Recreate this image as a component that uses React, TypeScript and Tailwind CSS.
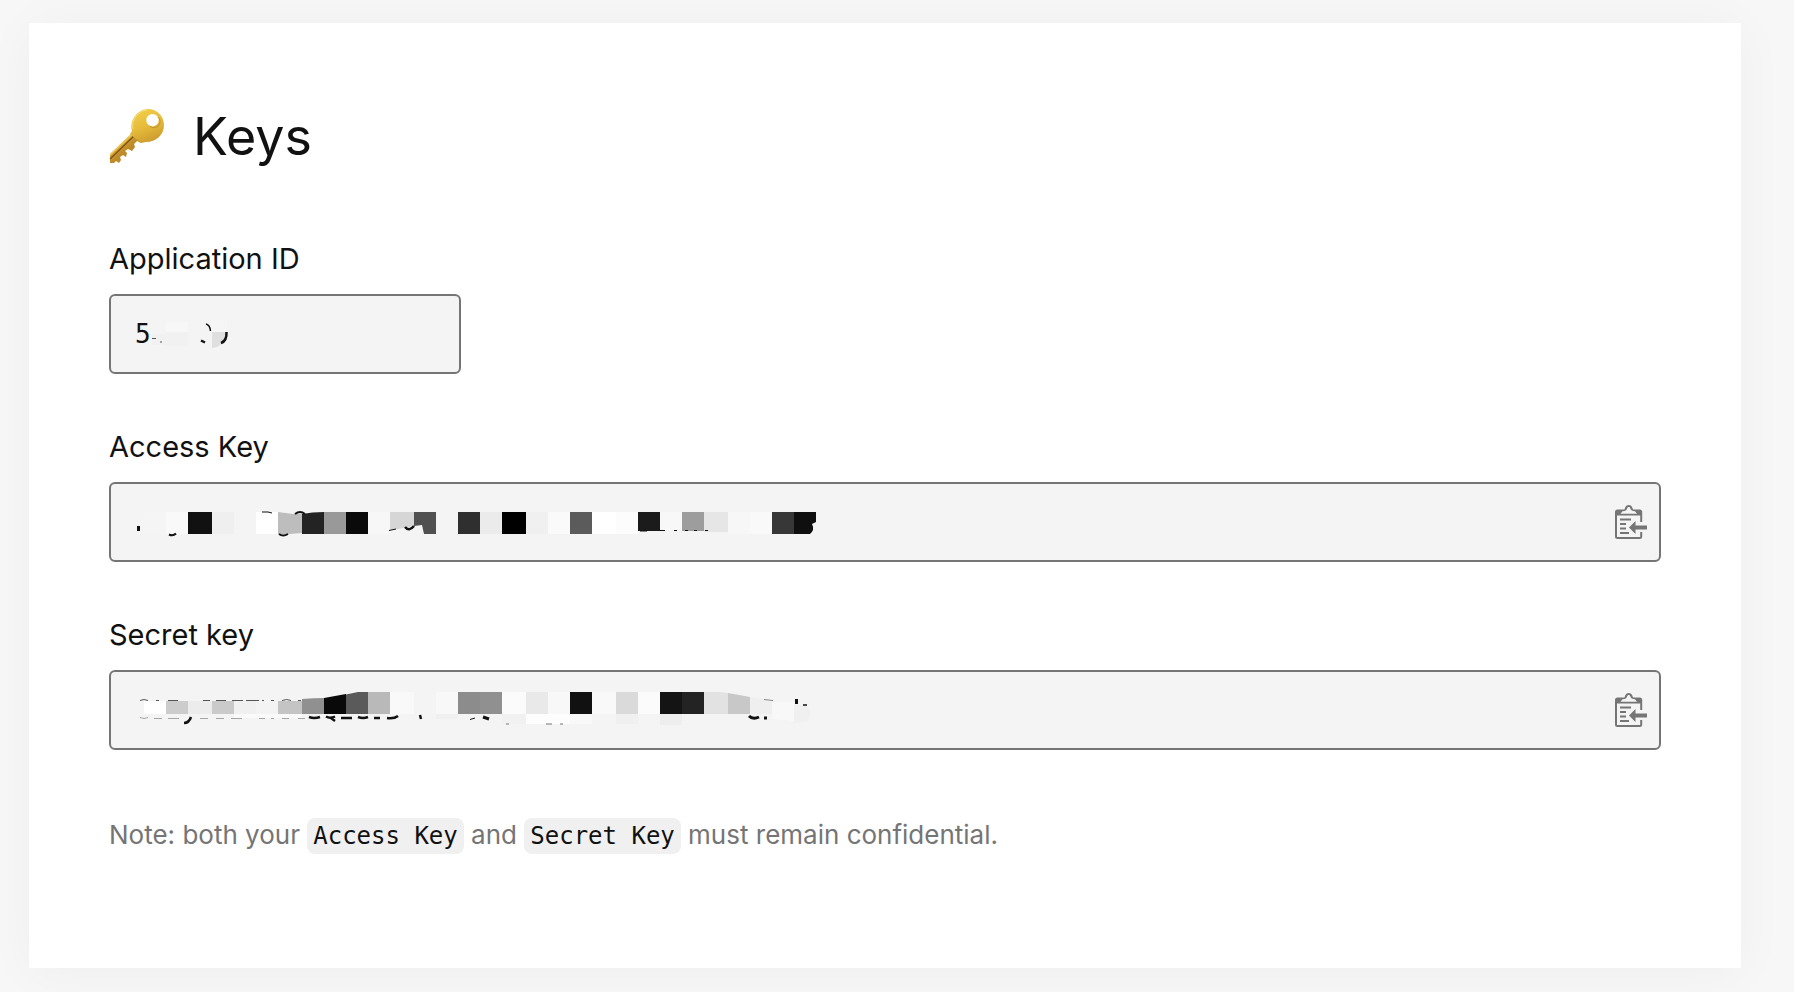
import React from 'react';

type Cell = { x: number; w: number; y?: number; h?: number; fill: string };

const ACCESS_CELLS: Cell[] = [
  { x: 35, w: 22, fill: '#f5f5f5' },
  { x: 57, w: 22, fill: '#f9f9f9' },
  { x: 79, w: 24, fill: '#111111' },
  { x: 103, w: 22, fill: '#efefef' },
  { x: 147, w: 22, fill: '#ffffff' },
  { x: 215, w: 22, fill: '#999999' },
  { x: 237, w: 22, fill: '#0a0a0a' },
  { x: 259, w: 22, fill: '#f7f7f7' },
  { x: 349, w: 22, fill: '#2f2f2f' },
  { x: 371, w: 22, fill: '#ebebeb' },
  { x: 393, w: 24, fill: '#000000' },
  { x: 417, w: 22, fill: '#f0f0f0' },
  { x: 439, w: 22, fill: '#fafafa' },
  { x: 461, w: 22, fill: '#5b5b5b' },
  { x: 483, w: 24, fill: '#ffffff' },
  { x: 507, w: 22, fill: '#fcfcfc' },
  { x: 529, w: 22, h: 19, fill: '#1b1b1b' },
  { x: 551, w: 22, h: 18, fill: '#f8f8f8' },
  { x: 573, w: 22, h: 19, fill: '#9d9d9d' },
  { x: 595, w: 24, h: 20, fill: '#e6e6e6' },
  { x: 619, w: 22, fill: '#f7f7f7' },
  { x: 641, w: 22, fill: '#f9f9f9' },
  { x: 663, w: 22, fill: '#373737' },
];

const SECRET_CELLS: Cell[] = [
  { x: 35, w: 22, y: 31, h: 13, fill: '#ffffff' },
  { x: 57, w: 22, y: 31, h: 13, fill: '#cccccc' },
  { x: 79, w: 24, y: 31, h: 13, fill: '#ececec' },
  { x: 103, w: 22, y: 31, h: 13, fill: '#cacaca' },
  { x: 125, w: 22, y: 31, h: 13, fill: '#f0f0f0' },
  { x: 147, w: 22, y: 31, h: 13, fill: '#f3f3f3' },
  { x: 169, w: 24, y: 31, h: 13, fill: '#c4c4c4' },
  { x: 259, w: 22, fill: '#b9b9b9' },
  { x: 281, w: 24, fill: '#f9f9f9' },
  { x: 327, w: 22, fill: '#f8f8f8' },
  { x: 349, w: 22, fill: '#8c8c8c' },
  { x: 371, w: 22, fill: '#909090' },
  { x: 393, w: 24, fill: '#fbfbfb' },
  { x: 417, w: 22, fill: '#e9e9e9' },
  { x: 439, w: 22, fill: '#f8f8f8' },
  { x: 461, w: 22, fill: '#111111' },
  { x: 483, w: 24, fill: '#f9f9f9' },
  { x: 507, w: 22, fill: '#dadada' },
  { x: 529, w: 22, fill: '#fbfbfb' },
  { x: 551, w: 22, fill: '#141414' },
  { x: 573, w: 22, fill: '#232323' },
  { x: 125, w: 68, y: 44, h: 4, fill: '#fafafa' },
  { x: 327, w: 22, y: 44, h: 5, fill: '#f0f0f0' },
  { x: 393, w: 24, y: 44, h: 10, fill: '#f1f1f1' },
  { x: 417, w: 44, y: 44, h: 10, fill: '#fdfdfd' },
  { x: 461, w: 22, y: 44, h: 10, fill: '#f8f8f8' },
  { x: 507, w: 22, y: 44, h: 10, fill: '#f0f0f0' },
  { x: 551, w: 22, y: 44, h: 11, fill: '#eeeeee' },
];

const Mosaic: React.FC<{ cells: Cell[]; top: number; children?: React.ReactNode }> = ({ cells, top, children }) => (
  <svg
    className="pointer-events-none absolute left-0 top-0"
    width="720"
    height="80"
    viewBox="0 0 720 80"
    aria-hidden="true"
  >
    {cells.map((c, i) => (
      <rect key={i} x={c.x} y={c.y ?? top} width={c.w} height={c.h ?? 22} fill={c.fill} />
    ))}
    {children}
  </svg>
);

const KeyIcon = () => (
  <svg className="h-14 w-14 shrink-0" viewBox="0 0 56 56" aria-hidden="true">
    <defs>
      <linearGradient id="bow" x1="0" y1="0" x2="0.4" y2="1">
        <stop offset="0" stopColor="#f3d148" />
        <stop offset="0.6" stopColor="#e6bb3b" />
        <stop offset="1" stopColor="#cf9f30" />
      </linearGradient>
      <linearGradient id="blade" x1="0" y1="0" x2="1" y2="1">
        <stop offset="0.2" stopColor="#e3b840" />
        <stop offset="0.5" stopColor="#bf8c2a" />
        <stop offset="1" stopColor="#b07d24" />
      </linearGradient>
    </defs>
    <path
      d="M22 25 L1 45 L1 54 L5 54 L7 52 L10 54 L12 51 L11 48 L14 46 L17 48 L18 44 L16 42 L19 40 L23 42 L26 38 L25 35 L28 32 L32 34 L34 32 Z"
      fill="url(#blade)"
    />
    <path d="M25 27 L1 50" stroke="#7d5212" strokeWidth="1.3" />
    <path d="M23 25.500 L1 46" stroke="#f0cb55" strokeWidth="1.2" />
    <path
      fillRule="evenodd"
      d="M39 0 C48 0 55 7 55 16 C55 26 47 33 37 33 L32 34 L21 25 L23 22 C20 11 29 0 39 0 Z M43.500 5 A6.200 6.200 0 1 0 43.500 17.400 A6.200 6.200 0 1 0 43.500 5 Z"
      fill="url(#bow)"
    />
    <path d="M49 8 A6 6 0 0 1 41 17.200" stroke="#b88a2c" strokeWidth="0.8" fill="none" />
    <path d="M24 20 C22 11 29 2 38 1" stroke="#fae58a" strokeWidth="0.8" fill="none" />
  </svg>
);

const PasteIcon = () => (
  <svg width="44" height="46" viewBox="0 0 44 46" fill="none" aria-hidden="true">
    <path
      d="M32.200 23 V13 Q32.200 11.500 30.700 11.500 H8.500 Q7 11.500 7 13 V37.500 Q7 39 8.500 39 H30.700 Q32.200 39 32.200 37.500 V33"
      stroke="#757575"
      strokeWidth="2"
    />
    <path d="M7 11 H32 V16.500 H7 Z" fill="#757575" />
    <path d="M13 12 C15.500 12 15.500 10.500 16 9 C17 5 22.500 5 23.500 9 C24 10.500 24 12 26.500 12 Z" fill="#757575" />
    <path
      d="M11.500 14.800 L13.500 12.200 C16.500 12 17.500 11.500 18 9.800 C18.500 7.500 21 7.500 21.500 9.800 C22 11.500 23 12 26 12.200 L28 14.800 Z"
      fill="#f4f4f4"
    />
    <path d="M11 20.500 H22 M11 25 H17 M11 29.500 H17 M11 34 H20" stroke="#757575" strokeWidth="2" />
    <path d="M20 28.500 L26.500 22 V26.500 H38 V30.500 H26.500 V35 Z" fill="#757575" />
  </svg>
);

type FieldProps = {
  id: string;
  label: string;
  value?: string;
  copy?: boolean;
  className?: string;
  children?: React.ReactNode;
};

const Field: React.FC<FieldProps> = ({ id, label, value = '', copy, className = '', children }) => (
  <div className={className}>
    <label htmlFor={id} className="mb-3 block text-[29px] leading-[47px]">
      {label}
    </label>
    <div className="relative">
      <input
        id={id}
        type="text"
        readOnly
        value={value}
        className="block h-20 w-full rounded-md border-2 border-[#757575] bg-[#f4f4f4] px-6 font-['DejaVu_Sans_Mono',monospace] text-[26px] text-[#111111] outline-none"
      />
      {children}
      {copy && (
        <button type="button" aria-label={`Copy ${label}`} className="absolute inset-y-0 right-2 flex items-center">
          <PasteIcon />
        </button>
      )}
    </div>
  </div>
);

const Code: React.FC<{ children: React.ReactNode }> = ({ children }) => (
  <code className="rounded-lg bg-[#f0f0f0] px-1.5 py-1 font-['DejaVu_Sans_Mono',monospace] text-2xl leading-10 text-[#111111]">
    {children}
  </code>
);

const App: React.FC = () => {
  return (
    <div className="min-h-screen bg-[#f7f7f7] pb-6 pl-[29px] pr-[53px] pt-[23px] font-['Inter',sans-serif] text-[#111111]">
      <main className="bg-white px-20 pb-28 pt-20 shadow-[0_4px_48px_rgba(0,0,0,0.04)]">
        <h1 className="flex items-center gap-7 text-[52px] leading-[68px]">
          <KeyIcon />
          Keys
        </h1>

        <form className="mt-16 flex flex-col gap-[49px]">
          <Field id="app-id" label="Application ID" value="5" className="w-[352px] max-w-full">
            <Mosaic
              top={30}
              cells={[
                { x: 43, w: 14, y: 40, h: 11, fill: '#f1f1f1' },
                { x: 57, w: 22, y: 28, h: 10, fill: '#f7f7f7' },
                { x: 57, w: 22, y: 38, h: 14, fill: '#f1f1f1' },
                { x: 102, w: 16, y: 26, h: 12, fill: '#f6f6f6' },
              ]}
            >
              <path d="M43 44.500 H47 M51 48 H53" stroke="#555555" strokeWidth="1" />
              <path d="M97 30 Q101 31 101.500 37" stroke="#111111" strokeWidth="1.5" fill="none" />
              <path d="M92 46.500 L96 48.500" stroke="#111111" strokeWidth="2.500" />
              <path d="M103 38 H118 Q115 53 103 54 Z" fill="#dfdfdf" />
              <path d="M117.500 38 Q118 47 112 49" stroke="#111111" strokeWidth="2.500" fill="none" />
            </Mosaic>
          </Field>

          <Field id="access-key" label="Access Key" copy>
            <Mosaic cells={ACCESS_CELLS} top={30}>
              <path d="M169 30 L184 32 L193 32 V51 L180 52 L169 52 Z" fill="#bdbdbd" />
              <path d="M193 32 Q203 30 215 30 V52 H193 Z" fill="#232323" />
              <path d="M281 30 H305 V44 L289 47 L281 48 Z" fill="#d6d6d6" />
              <path d="M305 30 H327 V52 H315 L313 43 L305 44 Z" fill="#505050" />
              <path d="M685 30 H707 V40 L703 42 Q706 48 701 52 H685 Z" fill="#0f0f0f" />
              <path d="M28 44 H31 V49 H28 Z" fill="#111111" />
              <g stroke="#111111" strokeWidth="2" fill="none">
                <path d="M60 52.500 Q64 54.500 67 51.500" />
                <path d="M153 30 H159 L163 31" strokeWidth="1" />
                <path d="M170 52 Q174 55 179 52" />
                <path d="M186 32 Q191 28 196 32" />
                <path d="M280 48.500 L287 47" strokeWidth="1" />
                <path d="M296 45 Q300 50 305 44" strokeWidth="2.500" />
                <path d="M531 49 H538 M550 48.500 H556 M565 48.500 H568 M576 48.500 H579 M585 48.500 H588 M596 48.500 H599" strokeWidth="1" />
              </g>
            </Mosaic>
          </Field>

          <Field id="secret-key" label="Secret key" copy>
            <Mosaic cells={SECRET_CELLS} top={22}>
              <path d="M193 29 Q205 28 215 28 V44 H193 Z" fill="#909090" />
              <path d="M215 28 L237 24 V44 H215 Z" fill="#090909" />
              <path d="M237 24.500 L249 22 H259 V44 H237 Z" fill="#5a5a5a" />
              <path d="M595 22 H610 L619 23 V44 H595 Z" fill="#e2e2e2" />
              <path d="M619 23 L641 27 V44 H619 Z" fill="#c8c8c8" />
              <path d="M641 27 L663 31 V44 H641 Z" fill="#efefef" />
              <path d="M663 32 H685 V51 L663 49 Z" fill="#f8f8f8" />
              <path d="M685 35 H696 Q705 43 698 52 L685 53 Z" fill="#f0f0f0" />
              <g stroke="#555555" strokeWidth="1" fill="none">
                <path d="M31 30.500 Q35 28.500 39 30.500 M47 30.500 H50 M59 30.500 H69 M94 30.500 H101 M107 30.500 H117 M123 30.500 H134 M137 30.500 H150 M153 30.500 H155 M162 30.500 H165 M173 30.500 Q178 28.500 182 30.500 M189 30.500 H192" />
              </g>
              <g stroke="#a5a5a5" strokeWidth="1" fill="none">
                <path d="M31 47.500 Q35 49.500 39 47.500 M45 48.500 H53 M59 48.500 H70 M91 48.500 H99 M107 48.500 H115 M122 48.500 H133 M150 48.500 H156 M162 48.500 H165 M173 48.500 H180 M189 48.500 H196" />
              </g>
              <g stroke="#111111" strokeWidth="2.500" fill="none">
                <path d="M82 47 Q80 53 75 53" />
                <path d="M200 47 Q205 49 211 47 M217 46.500 Q221 49 226 46.500 M222 48 L226 51 M232 48 H243 M249 47 Q254 49 259 47 M265 48 H271 M278 48 Q285 49 289 46 M311 45 L312 49" />
                <path d="M361 49.500 L366 48" strokeWidth="1" />
                <path d="M374 47 L380 49" strokeWidth="3" />
                <path d="M397 54 H400 M437 54 H443 M451 54 H454" stroke="#777777" strokeWidth="1" />
                <path d="M640 46 Q644 50 650 47 M655 48 H658" strokeWidth="3" />
                <path d="M655 29.500 L664 30.500" stroke="#888888" strokeWidth="1" />
                <path d="M687.500 29 V34" strokeWidth="3" />
                <path d="M694 35 H698" strokeWidth="1.500" />
              </g>
            </Mosaic>
          </Field>
        </form>

        <p className="mt-[65px] text-[26px] leading-10 text-[#757575]">
          Note: both your <Code>Access Key</Code> and <Code>Secret Key</Code> must remain confidential.
        </p>
      </main>
    </div>
  );
};

export default App;
